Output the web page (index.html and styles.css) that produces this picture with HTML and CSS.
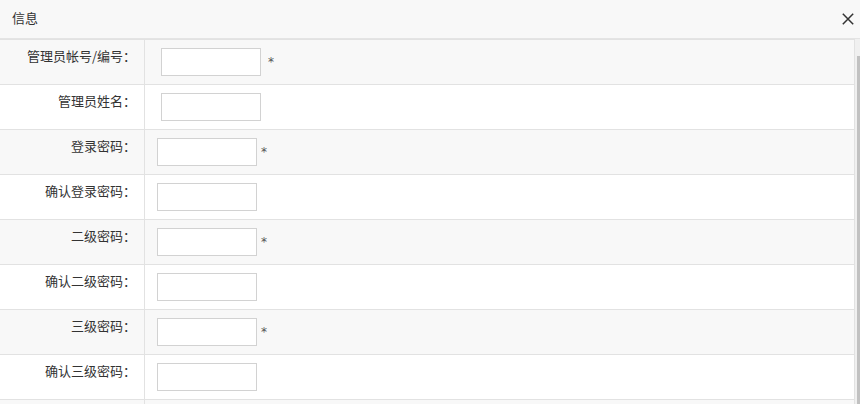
FILE: index.html
```html
<!DOCTYPE html>
<html lang="zh-CN">
<head>
<meta charset="utf-8">
<title>信息</title>
<link rel="stylesheet" href="styles.css">
</head>
<body>
<div class="dialog">
  <div class="dialog-header">
    <span class="dialog-title">信息</span>
    <svg class="close" width="12" height="12" viewBox="0 0 12 12"><path d="M0.8 0.8 L11.2 11.2 M11.2 0.8 L0.8 11.2" stroke="#333" stroke-width="1.5" fill="none"/></svg>
  </div>
  <div class="dialog-body">
    <div class="form">
      <div class="row odd first">
        <div class="label">管理员帐号/编号<span class="colon">：</span></div>
        <div class="field wide"><input class="input" type="text"><span class="req req-wide">*</span></div>
      </div>
      <div class="row">
        <div class="label">管理员姓名<span class="colon">：</span></div>
        <div class="field wide"><input class="input" type="text"></div>
      </div>
      <div class="row odd">
        <div class="label">登录密码<span class="colon">：</span></div>
        <div class="field"><input class="input" type="password"><span class="req">*</span></div>
      </div>
      <div class="row">
        <div class="label">确认登录密码<span class="colon">：</span></div>
        <div class="field"><input class="input" type="password"></div>
      </div>
      <div class="row odd">
        <div class="label">二级密码<span class="colon">：</span></div>
        <div class="field"><input class="input" type="password"><span class="req">*</span></div>
      </div>
      <div class="row">
        <div class="label">确认二级密码<span class="colon">：</span></div>
        <div class="field"><input class="input" type="password"></div>
      </div>
      <div class="row odd">
        <div class="label">三级密码<span class="colon">：</span></div>
        <div class="field"><input class="input" type="password"><span class="req">*</span></div>
      </div>
      <div class="row">
        <div class="label">确认三级密码<span class="colon">：</span></div>
        <div class="field"><input class="input" type="password"></div>
      </div>
      <div class="row odd">
        <div class="label">&nbsp;</div>
        <div class="field"></div>
      </div>
    </div>
    <div class="scrollbar"><div class="thumb"></div></div>
  </div>
</div>
</body>
</html>
```
FILE: styles.css
```css
html, body {
  margin: 0;
  padding: 0;
  width: 860px;
  height: 404px;
  overflow: hidden;
  background: #fff;
}
body {
  font-family: "Noto Sans CJK SC", "Noto Sans", sans-serif;
  font-size: 13px;
  color: #333;
}
.dialog {
  display: flex;
  flex-direction: column;
  height: 404px;
}
.dialog-header {
  height: 39px;
  box-sizing: border-box;
  background: #f8f8f8;
  border-bottom: 1px solid #e4e4e4;
  display: flex;
  align-items: center;
  justify-content: space-between;
  padding: 0 6px 0 12px;
}
.dialog-title {
  font-size: 13px;
  color: #333;
  line-height: 20px;
  margin-top: -3px;
}
.close {
  display: block;
}
.dialog-body {
  flex: 1;
  display: flex;
  overflow: hidden;
}
.form {
  flex: 1;
  overflow: hidden;
}
.row {
  display: grid;
  grid-template-columns: 145px 1fr;
  height: 45px;
  box-sizing: border-box;
  border-bottom: 1px solid #e2e2e2;
  border-right: 1px solid #e2e2e2;
  background: #fff;
}
.row.first {
  height: 46px;
  border-top: 1px solid #e2e2e2;
}
.row.odd {
  background: #f8f8f8;
}
.label {
  border-right: 1px solid #e2e2e2;
  text-align: right;
  padding: 6px 8px 0 0;
  line-height: 20px;
  color: #333;
  white-space: nowrap;
}
.colon {
  font-family: "Noto Sans CJK TC", "Noto Sans CJK SC", sans-serif;
}
.field {
  display: flex;
  align-items: center;
  padding-left: 12px;
}
.field.wide {
  padding-left: 16px;
}
.input {
  width: 100px;
  height: 28px;
  box-sizing: border-box;
  border: 1px solid #d2d2d2;
  background: #fff;
  margin: 0;
  padding: 0 4px;
  outline: none;
}
.req {
  margin-left: 4px;
  font-size: 12px;
  color: #555;
  font-family: "DejaVu Sans", sans-serif;
  line-height: 12px;
}
.req-wide {
  margin-left: 7px;
}
.scrollbar {
  width: 5px;
  background: #f0f0f0;
  display: flex;
  flex-direction: column;
}
.thumb {
  margin-top: 17px;
  margin-left: 2px;
  flex: 1;
  background: #c1c1c1;
}
```
